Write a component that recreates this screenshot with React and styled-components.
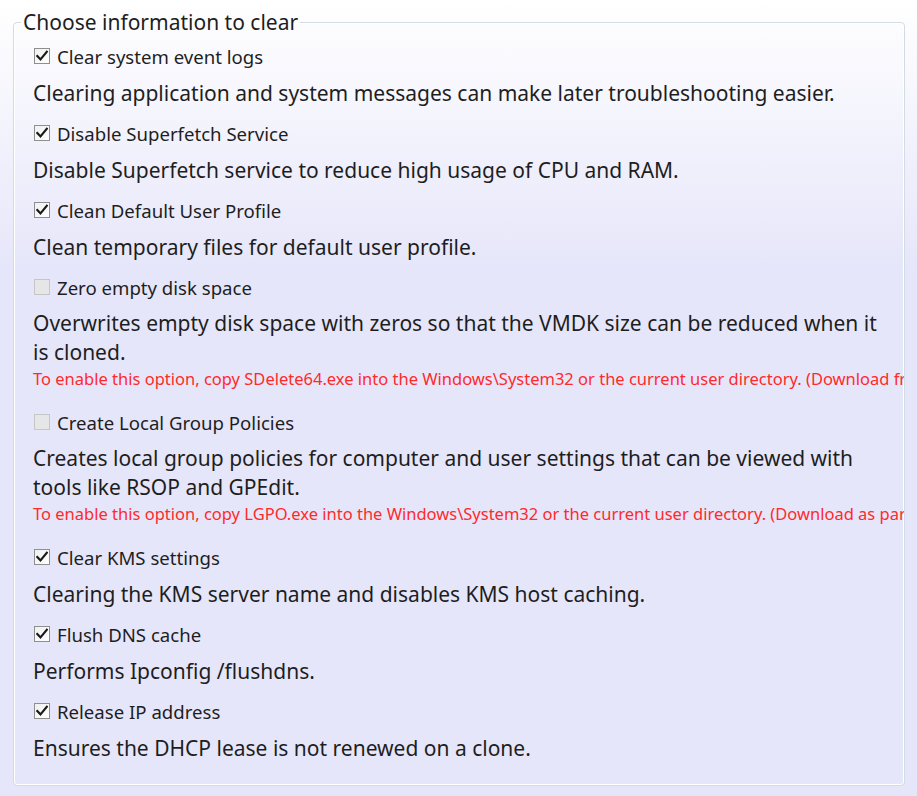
import React from "react";
import styled, { createGlobalStyle } from "styled-components";

const GlobalStyle = createGlobalStyle`
  html, body {
    margin: 0;
    padding: 0;
  }
  body {
    background-color: #e6e6fa;
    background-image: linear-gradient(to bottom, #ffffff 0px, #e6e6fa 270px);
    background-repeat: no-repeat;
    font-family: "Noto Sans", "Open Sans", sans-serif;
    color: #1e1e1e;
  }
`;

const Page = styled.div`
  box-sizing: border-box;
  height: 796px;
  padding: 9px 12px 10px 13px;
`;

const Group = styled.fieldset`
  box-sizing: border-box;
  height: 100%;
  margin: 0;
  padding: 9px 4px 0 19px;
  border: 1px solid #d3dce3;
  border-radius: 4px;
  box-shadow: inset 0 0 0 1px #ffffff;
  overflow: hidden;
  min-width: 0;
`;

const Title = styled.legend`
  margin-left: -12px;
  padding: 0 2px;
  font-size: 21px;
  line-height: 26px;
  color: #1e1e1e;
`;

const Item = styled.div`
  padding-bottom: 13px;
`;

const Label = styled.label`
  display: flex;
  align-items: center;
  gap: 7px;
  height: 24px;
  margin-left: 1px;
  font-size: 18.6px;
  color: #1e1e1e;
`;

const Box = styled.span`
  box-sizing: border-box;
  width: 16px;
  height: 16px;
  flex: none;
  border: 1px solid ${(p) => (p.$disabled ? "#c6c6c6" : "#8e8f8f")};
  background: ${(p) =>
    p.$disabled
      ? "#e6e6e6"
      : "linear-gradient(135deg, #f0f0f0 0%, #ffffff 100%)"};
  display: flex;
  align-items: center;
  justify-content: center;
`;

const Desc = styled.div`
  margin-top: ${(p) => (p.$tight ? "10px" : "11px")};
  font-size: 21px;
  line-height: 29px;
  white-space: pre;
`;

const Warn = styled.div`
  padding: 2px 0 8px;
  font-size: 16.5px;
  line-height: 20px;
  color: #ff2a2a;
  white-space: nowrap;
`;

const Check = () => (
  <svg width="12" height="12" viewBox="0 0 12 12">
    <path
      d="M1.3 6 L4.5 9.4 L10.8 1.8"
      fill="none"
      stroke="#1a1a1a"
      strokeWidth="2.2"
      strokeLinecap="square"
    />
  </svg>
);

const items = [
  {
    label: "Clear system event logs",
    checked: true,
    desc: "Clearing application and system messages can make later troubleshooting easier.",
  },
  {
    label: "Disable Superfetch Service",
    checked: true,
    desc: "Disable Superfetch service to reduce high usage of CPU and RAM.",
  },
  {
    label: "Clean Default User Profile",
    checked: true,
    desc: "Clean temporary files for default user profile.",
  },
  {
    label: "Zero empty disk space",
    disabled: true,
    desc: "Overwrites empty disk space with zeros so that the VMDK size can be reduced when it\nis cloned.",
    warn: "To enable this option, copy SDelete64.exe into the Windows\\System32 or the current user directory. (Download from Microsoft Sysinternals)",
  },
  {
    label: "Create Local Group Policies",
    disabled: true,
    desc: "Creates local group policies for computer and user settings that can be viewed with\ntools like RSOP and GPEdit.",
    warn: "To enable this option, copy LGPO.exe into the Windows\\System32 or the current user directory. (Download as part of Microsoft Security Compliance Toolkit)",
  },
  {
    label: "Clear KMS settings",
    checked: true,
    desc: "Clearing the KMS server name and disables KMS host caching.",
  },
  {
    label: "Flush DNS cache",
    checked: true,
    desc: "Performs Ipconfig /flushdns.",
  },
  {
    label: "Release IP address",
    checked: true,
    desc: "Ensures the DHCP lease is not renewed on a clone.",
  },
];

export default function App() {
  return (
    <>
      <GlobalStyle />
      <Page>
        <Group>
          <Title>Choose information to clear</Title>
          {items.map((it) => (
            <Item key={it.label}>
              <Label>
                <Box $disabled={it.disabled}>{it.checked && <Check />}</Box>
                {it.label}
              </Label>
              <Desc $tight={!!it.warn}>{it.desc}</Desc>
              {it.warn && <Warn>{it.warn}</Warn>}
            </Item>
          ))}
        </Group>
      </Page>
    </>
  );
}
